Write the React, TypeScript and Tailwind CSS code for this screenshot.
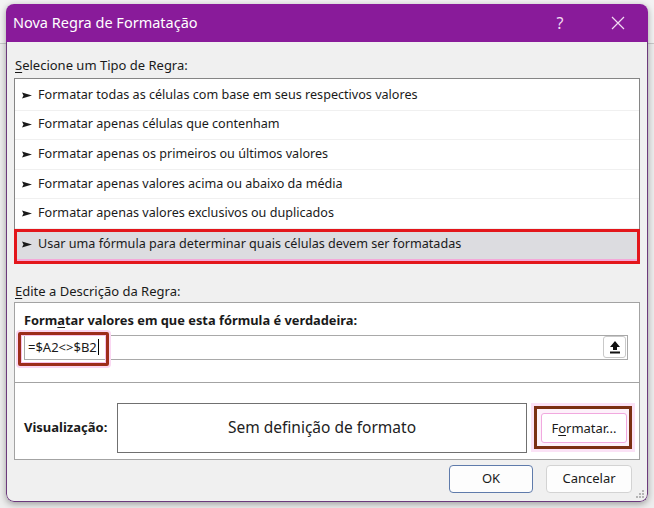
import React from 'react';

const rules = [
  'Formatar todas as células com base em seus respectivos valores',
  'Formatar apenas células que contenham',
  'Formatar apenas os primeiros ou últimos valores',
  'Formatar apenas valores acima ou abaixo da média',
  'Formatar apenas valores exclusivos ou duplicados',
];

function Pointer() {
  return (
    <svg width="10" height="7" viewBox="0 0 10 7" className="shrink-0">
      <polygon points="0,0.5 10,3.5 0,6.5 1.5,3.5" fill="#1a1a1a" />
    </svg>
  );
}

export default function App() {
  return (
    <div className="w-[654px] h-[508px] pt-[4px] pl-[6px] bg-[linear-gradient(to_bottom,#f3f3f3_0,#f3f3f3_43px,#c9c9c9_43px,#c9c9c9_44px,#eeeeee_44px)] font-['Noto_Sans',sans-serif] text-[13px] text-[#1a1a1a]">
      <div className="w-[642px] h-[498px] flex flex-col rounded-[8px] overflow-hidden shadow-[0_2px_7px_rgba(0,0,0,0.35)]">
        {/* Title bar */}
        <div className="h-[38px] shrink-0 bg-[#891b9a] flex items-center pl-[7px] pr-[7px] text-white">
          <span className="text-[14.5px]">Nova Regra de Formatação</span>
          <div className="ml-auto flex items-center gap-[12px]">
            <div className="w-[46px] h-[30px] flex items-center justify-center text-[16px] text-[#f2dcf2]">?</div>
            <div className="w-[46px] h-[30px] flex items-center justify-center">
              <svg width="14" height="14" viewBox="0 0 14 14">
                <path d="M1 1 L13 13 M13 1 L1 13" stroke="#f2dcf2" strokeWidth="1.2" />
              </svg>
            </div>
          </div>
        </div>

        {/* Body */}
        <div className="relative flex-1 bg-[#f0f0f0] border-x border-b border-[#6c3a7c] rounded-b-[8px] px-[7px] pt-[14px]">
          <div className="h-[18px] leading-[18px] pl-[1px] mb-[4px]">
            <span className="underline underline-offset-2">S</span>elecione um Tipo de Regra:
          </div>

          <div className="bg-white border border-[#858585] pt-[2px] text-[12.6px]">
            {rules.map((r) => (
              <div key={r} className="h-[29.6px] flex items-center pl-[7px] border-b border-[#f0f0f0]">
                <Pointer />
                <span className="ml-[6px]">{r}</span>
              </div>
            ))}
            <div className="-mx-[1px] -mb-[1px] h-[35px] flex items-center pl-[5px] pb-[4px] border-[3px] border-[#e3161b] bg-[#dcdce0] shadow-[inset_0_-2px_0_#f4a8d8]">
              <Pointer />
              <span className="ml-[6px]">Usar uma fórmula para determinar quais células devem ser formatadas</span>
            </div>
          </div>

          <div className="h-[18px] leading-[18px] pl-[1px] mt-[18px] mb-[2px]">
            <span className="underline underline-offset-2">E</span>dite a Descrição da Regra:
          </div>

          <div className="bg-white border border-[#a3a3a3]">
            <div className="pl-[9px] pr-[11px] pt-[8px] pb-[22px] border-b border-[#a3a3a3]">
              <div className="h-[18px] leading-[18px] font-bold mb-[6px] text-[12.85px]">
                Form<span className="underline underline-offset-2">a</span>tar valores em que esta fórmula é verdadeira:
              </div>
              <div className="relative h-[25px] border border-[#a9a9a9] bg-white flex items-center pl-[3px]">
                <span>=$A2&lt;&gt;$B2</span>
                <span className="w-[1px] h-[16px] bg-black ml-[1px]" />
                <div className="ml-auto mr-[1px] w-[23px] h-[22px] border border-[#c9c9c9] rounded-[3px] bg-white flex items-center justify-center">
                  <svg width="12" height="14" viewBox="0 0 12 14">
                    <path d="M6 1 L11 7 L8 7 L8 10 L4 10 L4 7 L1 7 Z" fill="#111" />
                    <rect x="1" y="11.5" width="10" height="2" fill="#111" />
                  </svg>
                </div>
                <div className="absolute left-[-7px] top-[-4px] w-[91px] h-[34px] border-[3px] border-[#9d2d1b] rounded-[2px] pointer-events-none shadow-[inset_0_0_0_1px_#f7c2ea,0_0_0_2px_#fad7f2]" />
              </div>
            </div>

            <div className="flex items-center pl-[9px] pr-[6px] pt-[20px] pb-[6px]">
              <div className="w-[93px] font-bold">Visualização:</div>
              <div className="w-[410px] h-[50px] border border-[#707070] bg-white flex items-center justify-center text-[15.5px] text-[#222]">
                Sem definição de formato
              </div>
              <div className="ml-[7px] w-[98px] h-[43px] border-[3px] border-[#7b2f12] pl-[4px] pt-[4px] bg-[#fdf1fa] shadow-[0_0_0_3px_#fbe2f6]">
                <div className="w-[86px] h-[30px] bg-white border border-[#f1a9df] rounded-[3px] flex items-center justify-center">
                  F<span className="underline underline-offset-2">o</span>rmatar...
                </div>
              </div>
            </div>
          </div>

          <div className="mt-[5px] flex justify-end gap-[13px] pr-[8px]">
            <div className="w-[84px] h-[28px] bg-[#fdfdfd] border border-[#5f7bab] rounded-[4px] flex items-center justify-center">
              OK
            </div>
            <div className="w-[86px] h-[28px] bg-[#fdfdfd] border border-[#d3d3d3] rounded-[4px] flex items-center justify-center">
              Cancelar
            </div>
          </div>

          <svg className="absolute right-[2px] bottom-[2px]" width="10" height="10" viewBox="0 0 10 10">
            <rect x="7" y="1" width="2" height="2" fill="#b5b5b5" />
            <rect x="4" y="4" width="2" height="2" fill="#b5b5b5" />
            <rect x="7" y="4" width="2" height="2" fill="#b5b5b5" />
            <rect x="1" y="7" width="2" height="2" fill="#b5b5b5" />
            <rect x="4" y="7" width="2" height="2" fill="#b5b5b5" />
            <rect x="7" y="7" width="2" height="2" fill="#b5b5b5" />
          </svg>
        </div>
      </div>
    </div>
  );
}
